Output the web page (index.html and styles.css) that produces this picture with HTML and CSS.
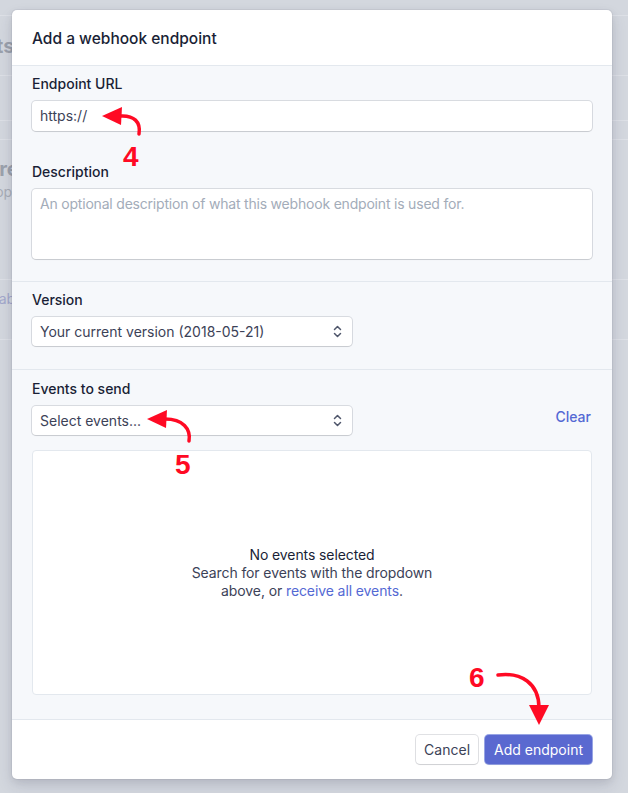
FILE: index.html
```html
<!DOCTYPE html>
<html lang="en">
<head>
<meta charset="utf-8">
<title>Add a webhook endpoint</title>
<link rel="stylesheet" href="styles.css">
</head>
<body>
<div class="backdrop">
  <div class="bg-row r1"></div>
  <div class="bg-row r2"><span class="bg-title">Endpoints</span></div>
  <div class="bg-row r3"></div>
  <div class="bg-row r4"></div>
  <div class="bg-row r5"><span class="bg-title">Tell us more</span><span class="bg-sub">Developers</span></div>
  <div class="bg-row r6"><span class="bg-link">Enable</span></div>
</div>

<div class="modal">
  <div class="modal-header">Add a webhook endpoint</div>
  <div class="modal-body">
    <div class="section">
      <div class="field">
        <label class="label">Endpoint URL</label>
        <div class="input">https://</div>
      </div>
      <div class="field">
        <label class="label">Description</label>
        <div class="textarea placeholder">An optional description of what this webhook endpoint is used for.</div>
      </div>
    </div>
    <div class="section mid">
      <div class="field">
        <label class="label">Version</label>
        <div class="select">
          <span>Your current version (2018-05-21)</span>
          <svg class="chev" width="9" height="13" viewBox="0 0 9 13"><path d="M1.5 4.5 L4.5 1.5 L7.5 4.5 M1.5 8.5 L4.5 11.5 L7.5 8.5" fill="none" stroke="#4f566b" stroke-width="1.5" stroke-linecap="round" stroke-linejoin="round"/></svg>
        </div>
      </div>
    </div>
    <div class="section last">
      <div class="field">
        <label class="label">Events to send</label>
        <div class="select-row">
          <div class="select">
            <span>Select events...</span>
            <svg class="chev" width="9" height="13" viewBox="0 0 9 13"><path d="M1.5 4.5 L4.5 1.5 L7.5 4.5 M1.5 8.5 L4.5 11.5 L7.5 8.5" fill="none" stroke="#4f566b" stroke-width="1.5" stroke-linecap="round" stroke-linejoin="round"/></svg>
          </div>
          <a class="clear">Clear</a>
        </div>
      </div>
      <div class="events-box">
        <div class="empty-title">No events selected</div>
        <div class="empty-text">Search for events with the dropdown<br>above, or <a class="link">receive all events</a>.</div>
      </div>
    </div>
  </div>
  <div class="modal-footer">
    <button class="btn btn-secondary">Cancel</button>
    <button class="btn btn-primary">Add endpoint</button>
  </div>
</div>

<svg class="annotations" width="628" height="793" viewBox="0 0 628 793">
  <g fill="none" stroke="#ff0a24" stroke-width="3.5" stroke-linecap="round">
    <path d="M139 134 C141 122 134 115 120 116"/>
    <path d="M189 441 C191 429 183 419 165 419"/>
    <path d="M498 675 C521 672 539 683 539 708"/>
  </g>
  <g fill="#ff0a24">
    <polygon points="102,116 122,107 121,125"/>
    <polygon points="147,419 167,410 166,428"/>
    <polygon points="539,725 529,705 549,705"/>
  </g>
  <g class="num" fill="#ff0a24">
    <text x="123" y="166">4</text>
    <text x="175" y="474">5</text>
    <text x="469" y="687">6</text>
  </g>
</svg>
</body>
</html>
```

FILE: styles.css
```css
* { box-sizing: border-box; }

html, body {
  margin: 0;
  padding: 0;
}

body {
  width: 628px;
  height: 793px;
  overflow: hidden;
  background: #d3d7de;
  font-family: Inter, "Noto Sans", "Liberation Sans", sans-serif;
  position: relative;
}

/* backdrop page (dimmed) */
.backdrop {
  display: flex;
  flex-direction: column;
}
.bg-row {
  border-bottom: 1px solid #dde0e6;
  position: relative;
  overflow: hidden;
}
.r1 { height: 16px; }
.r2 { height: 60px; display: flex; align-items: center; }
.r3 { height: 45px; }
.r4 { height: 19px; }
.r5 { height: 140px; display: flex; flex-direction: column; padding-top: 16px; }
.r6 { height: 60px; padding-top: 8px; }

.bg-title {
  font-size: 20px;
  font-weight: 700;
  color: #9ba1ac;
  margin-left: -84px;
  white-space: nowrap;
}
.r5 .bg-title { margin-left: -99px; line-height: 26px; }
.bg-sub {
  font-size: 14px;
  color: #a8adb7;
  margin-left: -42px;
  line-height: 20px;
  white-space: nowrap;
}
.bg-link {
  font-size: 14px;
  color: #a3a8cc;
  margin-left: -18px;
}

/* modal */
.modal {
  position: absolute;
  top: 10px;
  left: 12px;
  width: 600px;
  background: #fff;
  border-radius: 5px;
  overflow: hidden;
  box-shadow: 0 0 0 1px rgba(60, 66, 87, 0.06), 0 7px 16px rgba(50, 50, 93, 0.12), 0 3px 8px rgba(0, 0, 0, 0.08);
}

.modal-header {
  height: 56px;
  padding: 19px 20px 0;
  font-size: 15.5px;
  line-height: 20px;
  font-weight: 500;
  color: #1a1f36;
  border-bottom: 1px solid #e3e8ee;
}

.modal-body {
  background: #f6f8fb;
  border-bottom: 1px solid #e3e8ee;
}

.section {
  padding: 8px 20px 22px;
  border-bottom: 1px solid #e3e8ee;
  display: flex;
  flex-direction: column;
  gap: 31px;
}
.section.mid {
  padding-bottom: 23px;
}
.section.last {
  border-bottom: none;
  padding-top: 9px;
  padding-bottom: 24px;
  gap: 15px;
}

.field {
  display: flex;
  flex-direction: column;
}

.label {
  font-size: 14px;
  line-height: 20px;
  font-weight: 450;
  color: #1a1f36;
  margin-bottom: 7px;
}

.input, .textarea, .select {
  background: #fff;
  border-radius: 4px;
  box-shadow: 0 0 0 1px rgba(60, 66, 87, 0.16), 0 1px 1px rgba(0, 0, 0, 0.08);
  font-size: 14px;
  color: #3c4257;
}

.input {
  height: 30px;
  line-height: 30px;
  padding: 0 8px;
}

.textarea {
  height: 70px;
  padding: 5px 8px;
  line-height: 20px;
}
.placeholder {
  color: #a3acb9;
  letter-spacing: -0.2px;
}

.select {
  width: 320px;
  height: 29px;
  display: flex;
  align-items: center;
  justify-content: space-between;
  padding: 0 8px 0 8px;
}
.select .chev { margin-right: 2px; }

.select-row {
  display: flex;
  align-items: flex-start;
  justify-content: space-between;
}

.clear {
  font-size: 14px;
  line-height: 20px;
  color: #5469d4;
  font-weight: 500;
  margin-top: 1px;
  margin-right: 1px;
}

.events-box {
  height: 245px;
  background: #fff;
  border: 1px solid #e3e8ee;
  border-radius: 4px;
  display: flex;
  flex-direction: column;
  align-items: center;
  justify-content: center;
  text-align: center;
  font-size: 14px;
  line-height: 18px;
  color: #3c4257;
  letter-spacing: -0.1px;
  padding-top: 1px;
}
.empty-title {
  color: #1a1f36;
  font-weight: 400;
}
.link { color: #5469d4; }

.modal-footer {
  height: 59px;
  padding: 0 20px;
  display: flex;
  align-items: center;
  justify-content: flex-end;
  gap: 7px;
}

.btn {
  height: 29px;
  border: none;
  border-radius: 4px;
  font-family: inherit;
  font-size: 14px;
  font-weight: 400;
  padding: 0 9px;
}
.btn-secondary {
  background: #fff;
  color: #3c4257;
  padding: 0 8px;
  box-shadow: 0 0 0 1px rgba(60, 66, 87, 0.16), 0 1px 1px rgba(0, 0, 0, 0.08);
}
.btn-primary {
  background: #5a69d0;
  color: #fff;
  box-shadow: 0 0 0 1px rgba(84, 105, 212, 0.6), 0 1px 1px rgba(0, 0, 0, 0.1);
}

.annotations {
  position: absolute;
  top: 0;
  left: 0;
  pointer-events: none;
}
.num text {
  font-family: "Liberation Sans", Arial, sans-serif;
  font-weight: 700;
  font-size: 28px;
}
```
